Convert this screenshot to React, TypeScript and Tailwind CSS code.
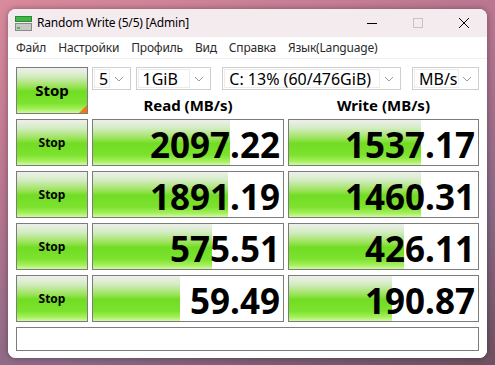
import React from "react";

const font = { fontFamily: '"Segoe UI", "Noto Sans", "Open Sans", sans-serif' };

const glossy =
  "bg-[linear-gradient(to_bottom,#eef0ec_0%,#d4ecc4_18%,#9ee45e_40%,#72dc24_52%,#7ce22e_78%,#a8f060_92%,#d2f8a8_100%)]";

function Chevron() {
  return (
    <svg width="10" height="6" viewBox="0 0 10 6" className="shrink-0">
      <path d="M1 1 L5 5 L9 1" fill="none" stroke="#9a9a9a" strokeWidth="1" />
    </svg>
  );
}

function Combo({ text, w }: { text: string; w: string }) {
  return (
    <div className={`${w} h-[23px] border border-[#cfcfcf] bg-white flex items-center pl-[1px] pr-[6px]`}>
      <div className="flex-1 h-[19px] border border-[#ececec] flex items-center pl-[4px] text-[16px] leading-none text-black">
        {text}
      </div>
      <div className="w-[14px] flex justify-end">
        <Chevron />
      </div>
    </div>
  );
}

function Cell({ value, fill }: { value: string; fill: number }) {
  return (
    <div className="relative h-[47px] border border-[#7c7c7c] bg-white overflow-hidden">
      <div className={`absolute left-0 top-0 bottom-0 ${glossy}`} style={{ width: fill }} />
      <div className="relative h-full flex items-center justify-end pr-[3px] pt-[3px] text-[35px] font-bold leading-none text-black">
        {value}
      </div>
    </div>
  );
}

function StopBtn() {
  return (
    <div className={`h-[47px] border border-[#7c7c7c] ${glossy} flex items-center justify-center text-[12px] font-bold text-black`}>
      Stop
    </div>
  );
}

const rows = [
  { r: "2097.22", rf: 137, w: "1537.17", wf: 132 },
  { r: "1891.19", rf: 135, w: "1460.31", wf: 132 },
  { r: "575.51", rf: 119, w: "426.11", wf: 115 },
  { r: "59.49", rf: 87, w: "190.87", wf: 103 },
];

export default function App() {
  return (
    <div
      className="w-[495px] h-[365px] overflow-hidden pl-[8px] pt-[9px] bg-[linear-gradient(160deg,#d98a9c_0%,#b97690_35%,#8a6a86_70%,#6e5060_100%)]"
      style={font}
    >
      <div className="w-[479px] h-[349px] bg-white rounded-[8px] overflow-hidden shadow-[0_0_6px_rgba(0,0,0,0.35)] flex flex-col">
        {/* title bar */}
        <div className="h-[28px] bg-[#f4ebef] flex items-center pl-[7px]">
          <svg width="17" height="16" viewBox="0 0 17 16" className="mr-[5px] mt-[1px]">
            <rect x="0.5" y="0.5" width="16" height="5" fill="#3fb54a" stroke="#2a8a35" />
            <rect x="0.5" y="7.5" width="16" height="7" fill="#c8c8c8" stroke="#8a8a8a" />
            <rect x="2" y="11" width="3" height="2" fill="#39c43f" />
          </svg>
          <span className="text-[12px] text-black leading-none tracking-[-0.2px]">Random Write (5/5) [Admin]</span>
          <div className="flex-1" />
          <div className="w-[46px] h-full flex items-center justify-center">
            <div className="w-[10px] h-[1px] bg-black" />
          </div>
          <div className="w-[46px] h-full flex items-center justify-center">
            <div className="w-[10px] h-[10px] border border-[#c4c4c4]" />
          </div>
          <div className="w-[46px] h-full flex items-center justify-center">
            <svg width="10" height="10" viewBox="0 0 10 10">
              <path d="M0 0 L10 10 M10 0 L0 10" stroke="#000" strokeWidth="1" />
            </svg>
          </div>
        </div>
        {/* menu */}
        <div className="h-[22px] bg-white flex items-center pl-[8px] gap-[12px] text-[12px] text-[#2b2b2b] leading-none tracking-[-0.2px] border-b border-[#f0f0f0]">
          <span>Файл</span>
          <span>Настройки</span>
          <span>Профиль</span>
          <span>Вид</span>
          <span>Справка</span>
          <span>Язык(Language)</span>
        </div>
        {/* content */}
        <div className="flex-1 bg-white pl-[8px] pr-[8px] pt-[8px]">
          <div className="grid grid-cols-[72px_192px_191px] gap-x-[4px]">
            <div className={`relative h-[47px] border border-[#7c7c7c] ${glossy} flex items-center justify-center text-[15px] font-bold text-black`}>
              Stop
              <div className="absolute right-0 bottom-0 w-0 h-0 border-l-[8px] border-l-transparent border-b-[8px] border-b-[#f07818]" />
            </div>
            <div className="col-span-2 flex flex-col">
              <div className="flex gap-[5px] h-[23px]">
                <Combo text="5" w="w-[40px]" />
                <Combo text="1GiB" w="w-[79px]" />
                <div className="w-[1px]" />
                <Combo text="C: 13% (60/476GiB)" w="w-[187px]" />
                <div className="w-[1px]" />
                <Combo text="MB/s" w="w-[67px]" />
              </div>
              <div className="flex flex-1 items-end pb-[1px]">
                <div className="w-[192px] text-center text-[15px] font-bold text-black leading-none">Read (MB/s)</div>
                <div className="w-[4px]" />
                <div className="w-[191px] text-center text-[15px] font-bold text-black leading-none">Write (MB/s)</div>
              </div>
            </div>
          </div>
          <div className="grid grid-cols-[72px_192px_191px] gap-x-[4px] gap-y-[5px] mt-[5px]">
            {rows.map((row, i) => (
              <React.Fragment key={i}>
                <StopBtn />
                <Cell value={row.r} fill={row.rf} />
                <Cell value={row.w} fill={row.wf} />
              </React.Fragment>
            ))}
          </div>
          <div className="mt-[5px] h-[24px] w-[463px] border border-[#7c7c7c] bg-white" />
        </div>
      </div>
    </div>
  );
}
